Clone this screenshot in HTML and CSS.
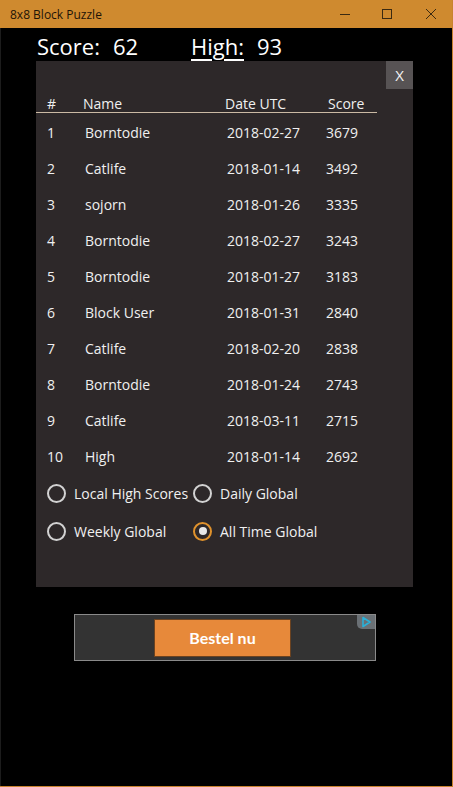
FILE: index.html
```html
<!DOCTYPE html>
<html lang="en">
<head>
    <meta charset="UTF-8">
    <meta name="viewport" content="width=device-width, initial-scale=1.0">
    <title>8x8 Block Puzzle</title>
    <link rel="stylesheet" href="styles.css">
</head>
<body>
    <div class="window">
        <div class="titlebar">
            <span class="title">8x8 Block Puzzle</span>
            <div class="controls">
                <span class="ctrl">
                    <svg width="12" height="12" viewBox="0 0 12 12"><path d="M1 6.5H11" stroke="#3b2a12" stroke-width="1"/></svg>
                </span>
                <span class="ctrl">
                    <svg width="12" height="12" viewBox="0 0 12 12"><rect x="1.5" y="1.5" width="9" height="9" fill="none" stroke="#3b2a12" stroke-width="1"/></svg>
                </span>
                <span class="ctrl">
                    <svg width="12" height="12" viewBox="0 0 12 12"><path d="M1 1L11 11M11 1L1 11" stroke="#3b2a12" stroke-width="1"/></svg>
                </span>
            </div>
        </div>

        <div class="content">
            <div class="scoreline">
                <span class="score">Score:<span class="num">62</span></span>
                <span class="high"><u>High:</u><span class="num">93</span></span>
            </div>

            <div class="panel">
                <div class="panel-top">
                    <button class="close-btn">X</button>
                </div>
                <div class="table-head">
                    <span>#</span>
                    <span>Name</span>
                    <span>Date UTC</span>
                    <span>Score</span>
                </div>
                <div class="table-body" id="rows"></div>

                <div class="options">
                    <label class="radio"><span class="dot"></span>Local High Scores</label>
                    <label class="radio"><span class="dot"></span>Daily Global</label>
                    <label class="radio"><span class="dot"></span>Weekly Global</label>
                    <label class="radio checked"><span class="dot"></span>All Time Global</label>
                </div>
            </div>

            <div class="ad">
                <div class="ad-button">Bestel nu</div>
                <span class="ad-choice">
                    <svg width="12" height="12" viewBox="0 0 12 12"><path d="M3 1.5L10 6L3 10.5Z" fill="none" stroke="#2ab0d8" stroke-width="1.6" stroke-linejoin="round"/></svg>
                </span>
            </div>
        </div>
    </div>

    <script>
        const scores = [
            ["1", "Borntodie", "2018-02-27", "3679"],
            ["2", "Catlife", "2018-01-14", "3492"],
            ["3", "sojorn", "2018-01-26", "3335"],
            ["4", "Borntodie", "2018-02-27", "3243"],
            ["5", "Borntodie", "2018-01-27", "3183"],
            ["6", "Block User", "2018-01-31", "2840"],
            ["7", "Catlife", "2018-02-20", "2838"],
            ["8", "Borntodie", "2018-01-24", "2743"],
            ["9", "Catlife", "2018-03-11", "2715"],
            ["10", "High", "2018-01-14", "2692"]
        ];

        const rows = document.getElementById("rows");
        scores.forEach(function (s) {
            const row = document.createElement("div");
            row.className = "table-row";
            s.forEach(function (v) {
                const cell = document.createElement("span");
                cell.textContent = v;
                row.appendChild(cell);
            });
            rows.appendChild(row);
        });
    </script>
</body>
</html>
```

FILE: styles.css
```css
body {
    margin: 0;
    background-color: #cfcfcf;
    font-family: "Open Sans", sans-serif;
}
.window {
    width: 452px;
    height: 786px;
    background-color: #000;
    border-right: 1px solid #c8832e;
    border-bottom: 1px solid #c8832e;
    display: flex;
    flex-direction: column;
    overflow: hidden;
}
.titlebar {
    height: 28px;
    flex-shrink: 0;
    background-color: #cf8a2f;
    display: flex;
    align-items: center;
    justify-content: space-between;
}
.title {
    font-size: 12px;
    color: #1e1408;
    padding-left: 10px;
}
.controls {
    display: flex;
    height: 28px;
}
.ctrl {
    width: 42px;
    display: flex;
    align-items: center;
    justify-content: center;
}
.ctrl:last-child {
    width: 44px;
    justify-content: flex-start;
    padding-left: 17px;
    box-sizing: border-box;
}
.content {
    flex: 1;
    border-left: 1px solid #1c1c1c;
    padding-left: 35px;
}
.scoreline {
    height: 33px;
    display: flex;
    align-items: center;
    color: #fff;
    font-size: 22px;
    line-height: 1;
    padding-top: 3px;
    box-sizing: border-box;
}
.score {
    width: 154px;
    padding-left: 1px;
}
.num {
    margin-left: 13px;
}
.high u {
    text-underline-offset: 4px;
    text-decoration-thickness: 2px;
}
.panel {
    width: 377px;
    height: 526px;
    background-color: #2d2829;
    color: #f0f0f0;
    font-size: 14px;
}
.panel-top {
    height: 28px;
    display: flex;
    justify-content: flex-end;
}
.close-btn {
    width: 27px;
    height: 28px;
    border: none;
    background-color: #575354;
    color: #f5f5f5;
    font-family: "Open Sans", sans-serif;
    font-size: 15px;
    padding: 0;
}
.table-head {
    width: 341px;
    height: 24px;
    display: grid;
    grid-template-columns: 36px 142px 103px 1fr;
    padding-left: 11px;
    box-sizing: border-box;
    align-items: end;
    line-height: 17px;
    border-bottom: 1px solid #cbbaa4;
}
.table-row {
    height: 36px;
    display: grid;
    grid-template-columns: 38px 142px 99px 1fr;
    padding-left: 11px;
    align-items: center;
}
.table-body {
    padding-top: 1px;
}
.options {
    display: grid;
    grid-template-columns: 146px 1fr;
    padding-left: 11px;
}
.radio {
    height: 38px;
    display: flex;
    align-items: center;
    gap: 8px;
}
.dot {
    width: 15px;
    height: 15px;
    border: 2px solid #d2d2d2;
    border-radius: 50%;
    display: flex;
    align-items: center;
    justify-content: center;
}
.radio.checked .dot {
    border-color: #e0922c;
}
.radio.checked .dot::after {
    content: "";
    width: 8px;
    height: 8px;
    border-radius: 50%;
    background-color: #e8e8e8;
}
.ad {
    position: relative;
    width: 300px;
    height: 45px;
    margin-top: 27px;
    margin-left: 38px;
    background-color: #333;
    border: 1px solid #8a8a8a;
    display: flex;
    justify-content: center;
    align-items: center;
}
.ad-button {
    width: 135px;
    height: 36px;
    margin-left: -5px;
    background-color: #e7893a;
    border: 1px solid #6b4220;
    color: #fff;
    font-family: "Lato", sans-serif;
    font-weight: bold;
    font-size: 16px;
    display: flex;
    align-items: center;
    justify-content: center;
}
.ad-choice {
    position: absolute;
    top: 0;
    right: 0;
    width: 18px;
    height: 14px;
    background-color: #6a7075;
    border-bottom-left-radius: 5px;
    display: flex;
    align-items: center;
    justify-content: center;
}
```
